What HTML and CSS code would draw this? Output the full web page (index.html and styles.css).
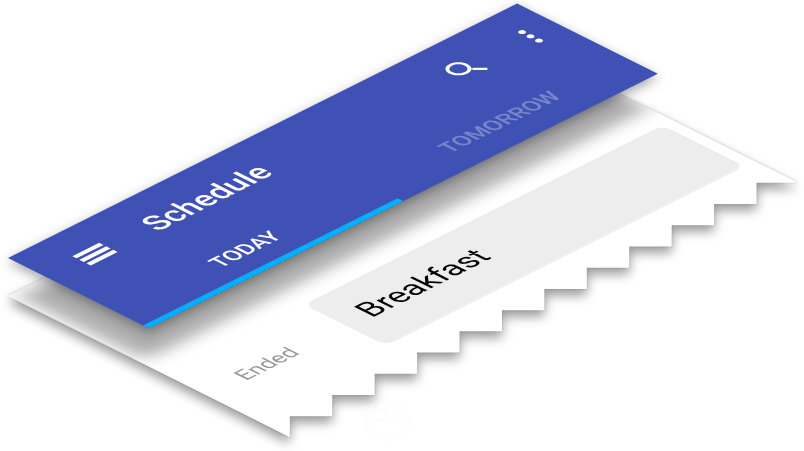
FILE: index.html
```html
<!DOCTYPE html>
<html lang="en">
<head>
<meta charset="utf-8">
<title>Schedule</title>
<meta name="viewport" content="width=device-width, initial-scale=1">
<link rel="stylesheet" href="styles.css">
</head>
<body>
<main class="scene">
  <div class="layer layer-sheet">
    <section class="plane sheet">
      <div class="cast-shadow"></div>
      <div class="event">
        <span class="event-status">Ended</span>
        <h2 class="event-card">Breakfast</h2>
      </div>
    </section>
  </div>
  <div class="layer layer-bar">
    <header class="plane app-bar">
      <div class="toolbar">
        <button class="icon-button" type="button" aria-label="Menu">
          <svg viewBox="0 0 24 24" aria-hidden="true"><path d="M2.500 18.500h19v-3h-19v3zm0-5h19v-3h-19v3zm0-8v3h19v-3h-19z"/></svg>
        </button>
        <h1 class="title">Schedule</h1>
        <button class="icon-button" type="button" aria-label="Search">
          <svg viewBox="0 0 24 24" aria-hidden="true"><path d="M15.5 14h-.79l-.28-.27C15.41 12.59 16 11.11 16 9.5 16 5.91 13.09 3 9.5 3S3 5.91 3 9.500 5.910 16 9.500 16c1.610 0 3.090-.590 4.230-1.570l.270.280v.790l5 4.990L20.490 19l-4.990-5zm-6 0C7.010 14 5 11.990 5 9.500S7.010 5 9.500 5 14 7.010 14 9.500 11.990 14 9.500 14z"/></svg>
        </button>
        <button class="icon-button" type="button" aria-label="More options">
          <svg viewBox="0 0 24 24" aria-hidden="true"><path d="M12 8c1.100 0 2-.9 2-2s-.9-2-2-2-2 .9-2 2 .9 2 2 2zm0 2c-1.100 0-2 .9-2 2s.9 2 2 2 2-.9 2-2-.9-2-2-2zm0 6c-1.100 0-2 .9-2 2s.9 2 2 2 2-.9 2-2-.9-2-2-2z"/></svg>
        </button>
      </div>
      <nav class="tabs">
        <a class="tab tab-active" href="#today">TODAY</a>
        <a class="tab" href="#tomorrow">TOMORROW</a>
      </nav>
    </header>
  </div>
  <svg class="watermark" viewBox="0 0 48 44" aria-hidden="true"><path d="M2 6v24l21 12 22-13V17M8 5v10q0 6 7 6t7-6V5M36 4v20"/></svg>
</main>
</body>
</html>
```
FILE: styles.css
```css
* {
  box-sizing: border-box;
}

body {
  margin: 0;
  background: #fff;
  font-family: Roboto, "Liberation Sans", sans-serif;
}

.scene {
  position: relative;
  display: grid;
  min-height: 100vh;
  overflow: hidden;
}

/* Both layers share one grid cell so the bar floats over the sheet. */
.layer {
  grid-area: 1 / 1;
  min-width: 0;
}

.layer-sheet {
  filter: drop-shadow(0 6px 6px rgba(0, 0, 0, 0.36)) drop-shadow(0 0 1px rgba(0, 0, 0, 0.2));
}

.layer-bar {
  filter: drop-shadow(0 4px 6px rgba(0, 0, 0, 0.36));
}

/* Isometric projection of a flat 360dp wide screen at 2x. */
.plane {
  width: 720px;
  transform: scaleY(0.5) rotate(-45deg);
  transform-origin: 0 0;
}

.app-bar {
  translate: 8px 258px;
  background: #3f51b5;
  color: #fff;
}

.toolbar {
  display: flex;
  align-items: center;
  height: 112px;
  padding: 0 13px 0 43px;
}

.icon-button {
  width: 48px;
  height: 48px;
  padding: 0;
  border: 0;
  background: none;
  color: inherit;
}

.icon-button + .icon-button {
  margin-left: 44px;
}

.icon-button svg {
  display: block;
  width: 48px;
  height: 48px;
  fill: currentColor;
}

.title {
  flex: 1;
  margin: 0 0 0 52px;
  font-size: 40px;
  line-height: 48px;
  font-weight: 500;
}

.tabs {
  display: grid;
  grid-template-columns: 1fr 1fr;
}

.tab {
  height: 87px;
  border-bottom: 8px solid transparent;
  padding-top: 8px;
  color: rgba(255, 255, 255, 0.3);
  font-size: 28px;
  line-height: 72px;
  font-weight: 500;
  text-align: center;
  text-decoration: none;
}

.tab-active {
  border-bottom-color: #00b0ff;
  color: #fff;
}

/* The lower edge is torn: twelve teeth, 60px wide and 30px deep. */
.sheet {
  translate: 7px 296px;
  height: 400px;
  padding: 222px 15px 0 49px;
  background: #fff;
  clip-path: polygon(
    0 0, 720px 0, 720px 400px, 690px 370px, 660px 400px, 630px 370px,
    600px 400px, 570px 370px, 540px 400px, 510px 370px, 480px 400px,
    450px 370px, 420px 400px, 390px 370px, 360px 400px, 330px 370px,
    300px 400px, 270px 370px, 240px 400px, 210px 370px, 180px 400px,
    150px 370px, 120px 400px, 90px 370px, 60px 400px, 30px 370px, 0 400px
  );
}

.cast-shadow {
  position: absolute;
  inset: 8px 0 auto 8px;
  height: 180px;
  background: rgba(0, 0, 0, 0.32);
  filter: blur(12px);
}

.event {
  position: relative;
  display: grid;
  grid-template-columns: 149px 1fr;
  align-items: baseline;
}

.event-status {
  color: #999;
  font-size: 28px;
}

.event-card {
  height: 116px;
  margin: 0;
  padding: 30px 29px 0;
  border-radius: 12px;
  background: #ededed;
  color: #000;
  font-size: 40px;
  line-height: 48px;
  font-weight: 400;
}

.watermark {
  position: absolute;
  top: 399px;
  left: 364px;
  width: 48px;
  height: 44px;
  fill: none;
  stroke: #fafafa;
  stroke-width: 1;
}
```
